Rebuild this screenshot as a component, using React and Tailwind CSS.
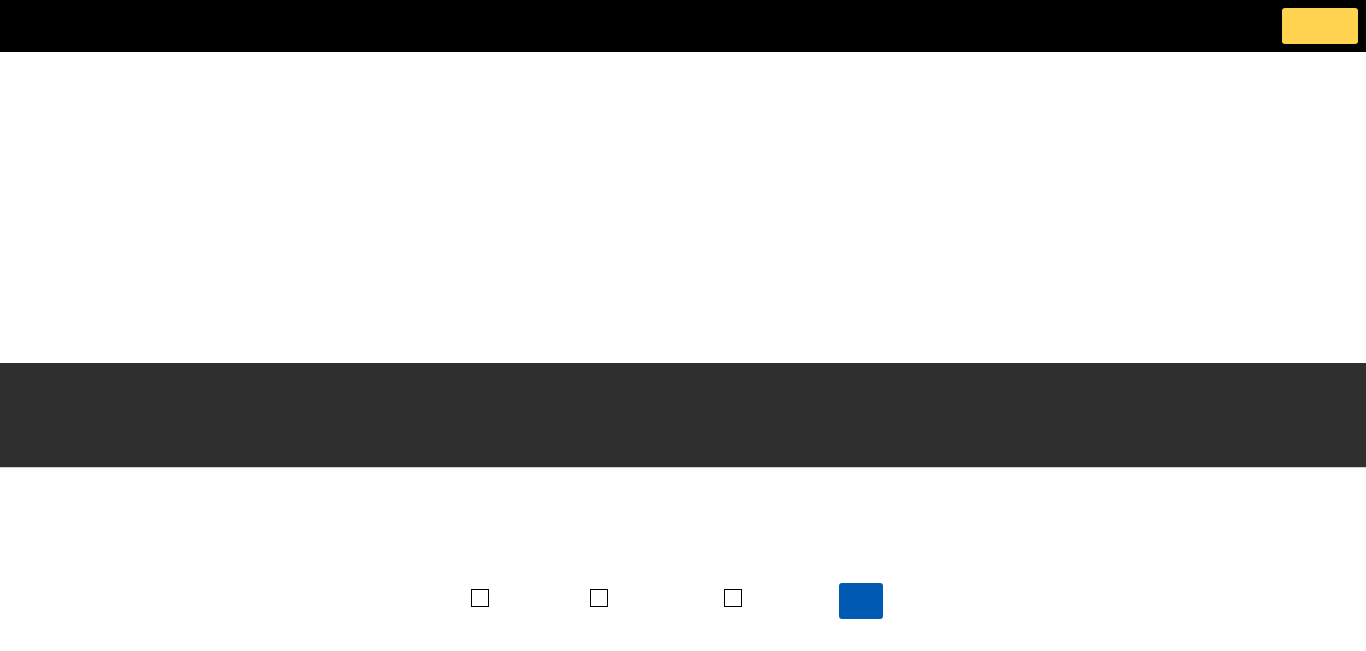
export default function App() {
  return (
    <div className="min-h-screen bg-white font-['Liberation_Sans',sans-serif]">
      {/* Top bar */}
      <header className="flex h-[52px] items-center justify-end bg-black pr-2">
        <button className="h-9 w-[76px] rounded-[3px] bg-[#ffd24f]" />
      </header>

      {/* Hero (empty) */}
      <section className="h-[311px]" />

      {/* Dark band */}
      <section className="h-[105px] border-b border-[#d0d0d0] bg-[#2f2f2f]" />

      {/* Options row */}
      <div className="flex items-start pl-[471px] pt-[115px]">
        <span className="mt-[6px] h-[18px] w-[18px] border border-black" />
        <span className="ml-[101px] mt-[6px] h-[18px] w-[18px] border border-black" />
        <span className="ml-[116px] mt-[6px] h-[18px] w-[18px] border border-black" />
        <button className="ml-[97px] h-9 w-11 rounded-[3px] bg-[#005ab4]" />
      </div>
    </div>
  );
}
